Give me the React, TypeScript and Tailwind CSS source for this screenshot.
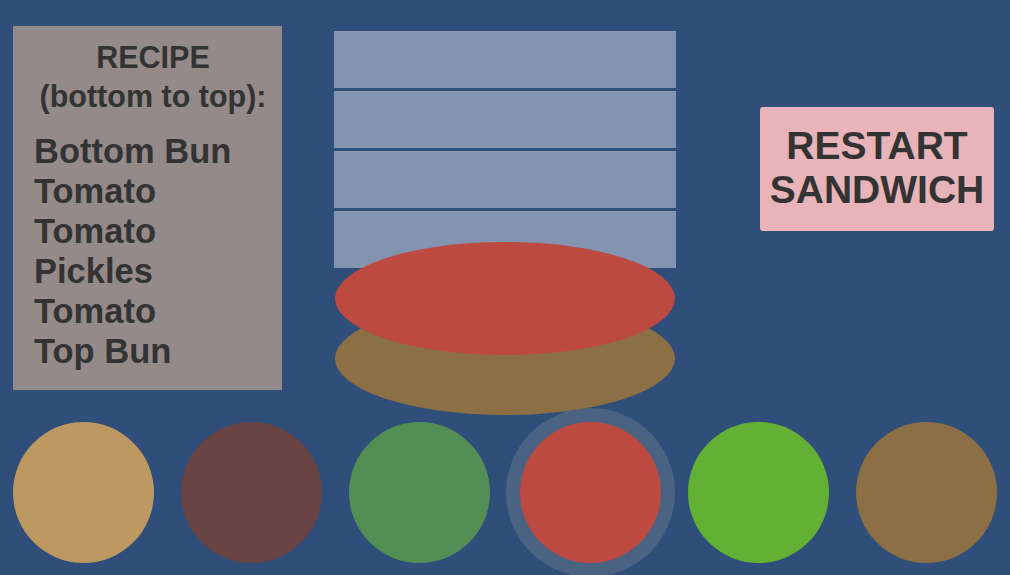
import React from "react";

const recipe = ["Bottom Bun", "Tomato", "Tomato", "Pickles", "Tomato", "Top Bun"];

const ingredients = [
  { name: "Bottom Bun", color: "bg-[#bd9861]" },
  { name: "Meat", color: "bg-[#674443]" },
  { name: "Lettuce", color: "bg-[#538f55]" },
  { name: "Tomato", color: "bg-[#bd4a40]", selected: true },
  { name: "Pickles", color: "bg-[#62b135]" },
  { name: "Top Bun", color: "bg-[#8c6f44]" },
];

export default function App() {
  return (
    <div
      className="w-[1010px] h-[575px] overflow-hidden bg-[#2f4e7a] text-[#333333]"
      style={{ fontFamily: '"Liberation Sans", Arial, sans-serif' }}
    >
      <div className="flex items-start h-[422px]">
        {/* recipe card */}
        <div className="ml-[13px] mt-[26px] w-[269px] h-[364px] bg-[#958a8a] pt-[12px] pl-[21px] font-bold">
          <div className="pr-[10px] text-center text-[30.5px] leading-[39px]">
            <div>RECIPE</div>
            <div className="whitespace-nowrap">(bottom to top):</div>
          </div>
          <ul className="mt-[15px] text-[34.5px] leading-[40px]">
            {recipe.map((item, i) => (
              <li key={i}>{item}</li>
            ))}
          </ul>
        </div>

        {/* sandwich stack */}
        <div className="relative z-10 ml-[52px] mt-[31px] w-[342px]">
          <div className="flex flex-col gap-[3px]">
            {[0, 1, 2, 3].map((i) => (
              <div key={i} className="h-[57px] bg-[#8294af] border-t border-[#8a9cb5]" />
            ))}
          </div>
          <div className="absolute left-[1px] top-[271px] w-[340px] h-[113px] rounded-[50%] bg-[#8c6f44]" />
          <div className="absolute left-[1px] top-[211px] w-[340px] h-[113px] rounded-[50%] bg-[#bd4a40]" />
        </div>

        {/* restart */}
        <button className="ml-[84px] mt-[107px] w-[234px] h-[124px] rounded-[3px] bg-[#e8b4b9] flex flex-col items-center justify-center pb-[2px] font-bold text-[39px] leading-[44px]">
          <span>RESTART</span>
          <span>SANDWICH</span>
        </button>
      </div>

      {/* ingredient picker */}
      <div className="flex pl-[13px] gap-[27px]">
        {ingredients.map((ing) => (
          <div
            key={ing.name}
            title={ing.name}
            className={`w-[141px] h-[141px] shrink-0 rounded-full ${ing.color} ${
              ing.selected ? "ml-[3px] ring-[14px] ring-[#4a6382]" : ""
            }`}
          />
        ))}
      </div>
    </div>
  );
}
